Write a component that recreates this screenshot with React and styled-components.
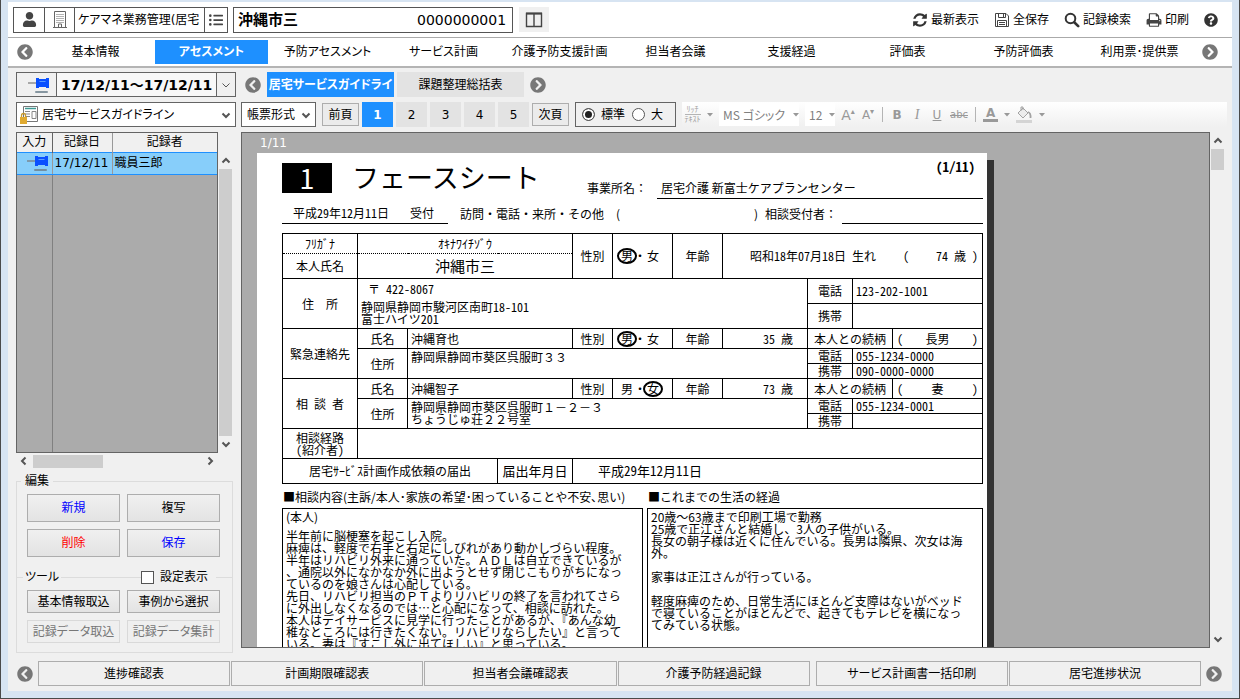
import { useState } from "react"
import styled, { createGlobalStyle, css } from "styled-components"
import { FaUser, FaListUl, FaChevronCircleLeft, FaChevronCircleRight, FaQuestionCircle } from "react-icons/fa"

const TABS = ["基本情報", "アセスメント", "予防アセスメント", "サービス計画", "介護予防支援計画", "担当者会議", "支援経過", "評価表", "予防評価表", "利用票･提供票"]
const REPORTS = ["進捗確認表", "計画期限確認表", "担当者会議確認表", "介護予防経過記録", "サービス計画書一括印刷", "居宅進捗状況"]
const COLUMNS = [75, 50, 90, 75, 40, 60, 50, 85, 45, 40, 90]

const CONSULTATION = `半年前に脳梗塞を起こし入院。
麻痺は、軽度で右手と右足にしびれがあり動かしづらい程度。
半年はリハビリ外来に通っていた。ＡＤＬは自立できているが
、通院以外になかなか外に出ようとせず閉じこもりがちになっ
ているのを娘さんは心配している。
先日、リハビリ担当のＰＴよりリハビリの終了を言われてさら
に外出しなくなるのでは…と心配になって、相談に訪れた。
本人はデイサービスに見学に行ったことがあるが、『あんな幼
稚なところには行きたくない。リハビリならしたい』と言って
いる。妻は『すこし外に出てほしい』と思っている。`

const HISTORY = `20歳～63歳まで印刷工場で勤務
25歳で正江さんと結婚し、3人の子供がいる。
長女の朝子様は近くに住んでいる。長男は隣県、次女は海
外。

家事は正江さんが行っている。

軽度麻痺のため、日常生活にほとんど支障はないがベッド
で寝ていることがほとんどで、起きてもテレビを横になっ
てみている状態。`

/* ---------- icons ---------- */

const Building = () => (
  <svg width="16" height="18" viewBox="0 0 16 18" fill="none" stroke="#666">
    <path d="M2.500 .5h11v16h-11z" />
    <path d="M4.500 3.500h8M4.500 5.500h8M4.500 7.500h8M4.500 9.500h8M4.500 11.500h8" strokeDasharray="1 1" />
    <path d="M6.500 16v-3h3v3M1 16.500h14" />
  </svg>
)

const Panes = () => (
  <svg width="18" height="16" viewBox="0 0 18 16" fill="none" stroke="#444">
    <path d="M1.500 1.500h15v13h-15zM9 2v12" strokeWidth="1.400" />
    <path d="M1 1.500h16" strokeWidth="2" />
  </svg>
)

const Refresh = () => (
  <svg width="16" height="16" viewBox="0 0 1792 1792" fill="#333">
    <path d="M1639 1056q0 5-1 7-64 268-268 434.500t-478 166.500q-146 0-282.500-55t-243.500-157l-129 129q-19 19-45 19t-45-19-19-45v-448q0-26 19-45t45-19h448q26 0 45 19t19 45-19 45l-137 137q71 66 161 102t187 36q134 0 250-65t186-179q11-17 53-117 8-23 30-23h192q13 0 22.500 9.500t9.500 22.500zm25-800v448q0 26-19 45t-45 19h-448q-26 0-45-19t-19-45 19-45l138-138q-148-137-349-137-134 0-250 65t-186 179q-11 17-53 117-8 23-30 23h-199q-13 0-22.500-9.500t-9.500-22.500v-7q65-268 270-434.500t480-166.500q146 0 284 55.500t245 156.500l130-129q19-19 45-19t45 19 19 45z" />
  </svg>
)

const Floppy = () => (
  <svg width="16" height="16" viewBox="0 0 16 16" fill="none" stroke="#444">
    <path d="M1.500 1.500h10.500l2.500 2.500v10.500h-13z" />
    <path d="M4.500 1.500v4h7v-4M9.500 2v3M3.500 14.500v-6h9v6M5 10.500h6M5 12.500h6" />
  </svg>
)

const Search = () => (
  <svg width="16" height="16" viewBox="0 0 16 16" fill="none" stroke="#333" strokeLinecap="round">
    <circle cx="6.500" cy="6.500" r="4.800" strokeWidth="2" />
    <path d="M10.500 10.500l3.700 3.700" strokeWidth="2.600" />
  </svg>
)

const Print = () => (
  <svg width="16" height="16" viewBox="0 0 1792 1792" fill="#444">
    <path d="M448 1536h896v-256h-896v256zm0-640h896v-384h-160q-40 0-68-28t-28-68v-160h-640v640zm1152 64q0-26-19-45t-45-19-45 19-19 45 19 45 45 19 45-19 19-45zm128 0v416q0 13-9.500 22.500t-22.500 9.500h-224v160q0 40-28 68t-68 28h-960q-40 0-68-28t-28-68v-160h-224q-13 0-22.500-9.500t-9.500-22.500v-416q0-79 56.500-135.500t135.500-56.500h64v-544q0-40 28-68t68-28h672q40 0 88 20t76 48l152 152q28 28 48 76t20 88v256h64q79 0 135.500 56.500t56.500 135.500z" />
  </svg>
)

const Pin = () => (
  <svg width="22" height="18" viewBox="0 0 22 18">
    <path d="M0 7h9" stroke="#777" strokeWidth="1.200" />
    <path d="M8 2h3v1h7V2h3v10h-3v-1h-7v1H8z" fill="#0a50ff" />
    <path d="M11.500 5.500h6" stroke="#5b9bff" />
    <rect x="7" y="15" width="13" height="2" rx="1" fill="#6b7f8c" opacity=".8" />
  </svg>
)

const FormLock = () => (
  <svg width="20" height="20" viewBox="0 0 20 20" fill="none">
    <path d="M4.500 1.500h14v15h-14z" fill="#fff" stroke="#777" />
    <path d="M6 3.500h11" stroke="#3f9a94" strokeWidth="1.500" />
    <path d="M6 6.500h5M6 9h5M6 11.500h5M13 6.500h4v7h-4z" stroke="#888" />
    <path d="M2.500 12v-1.500q0-2 2-2t2 2V12" stroke="#c99a2c" strokeWidth="1.300" />
    <rect x="1" y="12" width="7" height="7" fill="#e0aa30" />
  </svg>
)

const Bucket = () => (
  <svg width="17" height="18" viewBox="0 0 17 18" fill="none" stroke="#a3a3a3">
    <path d="M2 7l5-5 5 5-5 5zM5 5V1h2v3" fill="#ececec" />
    <path d="M12 6q3 1 2.500 6" strokeWidth="1.800" />
    <path d="M0 15.500h16" stroke="#d4d4d4" strokeWidth="3" />
  </svg>
)

const TURN = { down: 0, left: 90, up: 180, right: 270 }
const Chevron = ({ dir = "down", weight = 2 }) => (
  <svg width="10" height="10" viewBox="0 0 10 10" fill="none" stroke="#555">
    <path d="M1.500 3.500L5 7l3.500-3.500" strokeWidth={weight} transform={`rotate(${TURN[dir]} 5 5)`} />
  </svg>
)

const Caret = () => (
  <svg width="6" height="4" viewBox="0 0 6 4" fill="#999"><path d="M0 0h6L3 3.500z" /></svg>
)

const Sex = ({ value }) => (
  <SexPair>
    <Mark $on={value === "男"}>男</Mark><i>・</i><Mark $on={value === "女"}>女</Mark>
  </SexPair>
)

const PersonRows = ({ title, name, sex, age, relation, address, tel, mobile }) => (
  <>
    <Row $h={20}>
      <Cell rowSpan={3}>{title}</Cell>
      <Cell>氏名</Cell>
      <Cell $left colSpan={2}>{name}</Cell>
      <Cell>性別</Cell>
      <Cell><Sex value={sex} /></Cell>
      <Cell>年齢</Cell>
      <Cell $right>{age} 歳</Cell>
      <Cell colSpan={2}>本人との続柄</Cell>
      <Cell><Spread><span>(</span><span>{relation}</span><span>)</span></Spread></Cell>
    </Row>
    <Row $h={15}>
      <Cell rowSpan={2}>住所</Cell>
      <Cell $left $top $wide colSpan={6} rowSpan={2}>{address}</Cell>
      <Cell>電話</Cell>
      <Cell $left colSpan={2}>{tel}</Cell>
    </Row>
    <Row $h={15}>
      <Cell>携帯</Cell>
      <Cell $left colSpan={2}>{mobile}</Cell>
    </Row>
  </>
)

const FaceSheet = () => (
  <Paper>
    <PaperHead>
      <SheetNo>1</SheetNo>
      <SheetTitle>フェースシート</SheetTitle>
      <HeadRight>
        <PageCount>(1/11)</PageCount>
        <Office>事業所名：<OfficeName>居宅介護 新富士ケアプランセンター</OfficeName></Office>
      </HeadRight>
    </PaperHead>
    <Reception>
      <ReceivedOn><span>平成29年12月11日</span><span>受付</span></ReceivedOn>
      <Method><span>訪問・電話・来所・その他　(</span><span>)</span></Method>
      <span>相談受付者：</span>
      <Blank />
    </Reception>

    <Sheet>
      <colgroup>{COLUMNS.map((w, i) => <Col key={i} $w={w} />)}</colgroup>
      <tbody>
        <Row $h={20}>
          <Cell $dotted="bottom">ﾌﾘｶﾞﾅ</Cell>
          <Cell $dotted="bottom" colSpan={3}>ｵｷﾅﾜｲﾁｿﾞｳ</Cell>
          <Cell rowSpan={2}>性別</Cell>
          <Cell rowSpan={2}><Sex value="男" /></Cell>
          <Cell rowSpan={2}>年齢</Cell>
          <Cell colSpan={4} rowSpan={2}>
            <Birth><span>昭和18年07月18日 生れ</span><span>(</span><span>74 歳 )</span></Birth>
          </Cell>
        </Row>
        <Row $h={25}>
          <Cell $dotted="top">本人氏名</Cell>
          <Cell $dotted="top" $size={15} colSpan={3}>沖縄市三</Cell>
        </Row>
        <Row $h={25}>
          <Cell $wide rowSpan={2}>住　所</Cell>
          <Cell $left $top rowSpan={2} colSpan={7}>
            <Postal>〒 422-8067</Postal>
            {"静岡県静岡市駿河区南町18-101\n富士ハイツ201"}
          </Cell>
          <Cell>電話</Cell>
          <Cell $left colSpan={2}>123-202-1001</Cell>
        </Row>
        <Row $h={25}>
          <Cell>携帯</Cell>
          <Cell colSpan={2} />
        </Row>
        <PersonRows title="緊急連絡先" name="沖縄育也" sex="男" age="35" relation="長男"
          address="静岡県静岡市葵区呉服町３３" tel="055-1234-0000" mobile="090-0000-0000" />
        <PersonRows title="相 談 者" name="沖縄智子" sex="女" age="73" relation="妻"
          address={"静岡県静岡市葵区呉服町１－２－３\nちょうじゅ荘２２号室"} tel="055-1234-0001" />
        <Row $h={30}>
          <Cell>{"相談経路\n(紹介者)"}</Cell>
          <Cell colSpan={10} />
        </Row>
        <Row $h={25}>
          <Cell colSpan={3}>居宅ｻｰﾋﾞｽ計画作成依頼の届出</Cell>
          <Cell $size={13}>届出年月日</Cell>
          <Cell $left $indent $size={13} colSpan={7}>平成29年12月11日</Cell>
        </Row>
      </tbody>
    </Sheet>

    <Notes>
      <NoteTitle>■相談内容(主訴/本人･家族の希望･困っていることや不安､思い)</NoteTitle>
      <NoteTitle>■これまでの生活の経過</NoteTitle>
      <Note><Who>(本人)</Who>{CONSULTATION}</Note>
      <Note>{HISTORY}</Note>
    </Notes>
  </Paper>
)

const App = () => {
  const [tab, setTab] = useState(1)
  const [page, setPage] = useState(1)
  const [size, setSize] = useState("標準")

  return (
    <Frame>
      <GlobalStyle />
      <Header>
        <Group>
          <IconButton aria-label="利用者"><FaUser size={15} /></IconButton>
          <IconButton aria-label="事業所"><Building /></IconButton>
          <Business>ケアマネ業務管理(居宅</Business>
          <IconButton $narrow aria-label="一覧"><FaListUl size={14} /></IconButton>
        </Group>
        <Group>
          <ClientName aria-label="利用者名" defaultValue="沖縄市三" />
          <ClientCode aria-label="利用者番号" defaultValue="0000000001" />
        </Group>
        <PaneButton aria-label="分割"><Panes /></PaneButton>
        <Actions>
          <Action><Refresh />最新表示</Action>
          <Action><Floppy />全保存</Action>
          <Action><Search />記録検索</Action>
          <Action><Print />印刷</Action>
          <Action aria-label="ヘルプ"><FaQuestionCircle size={14} /></Action>
        </Actions>
      </Header>

      <TabBar>
        <Round aria-label="前へ"><FaChevronCircleLeft size={16} /></Round>
        <Tabs>
          {TABS.map((t, i) => <Tab key={t} $active={i === tab} onClick={() => setTab(i)}>{t}</Tab>)}
        </Tabs>
        <Round aria-label="次へ"><FaChevronCircleRight size={16} /></Round>
      </TabBar>

      <Body>
        <Side>
          <Period>
            <PinCell><Pin /></PinCell>
            <PeriodInput aria-label="期間" defaultValue="17/12/11～17/12/11" />
            <Drop aria-label="期間を選択"><Chevron weight={1} /></Drop>
          </Period>
          <SelectBox>
            <FormLock />
            <Select aria-label="帳票"><option>居宅サービスガイドライン</option></Select>
            <Chevron />
          </SelectBox>

          <ListGrid>
            <List>
              <ListTable>
                <thead><tr><th>入力</th><th>記録日</th><th>記録者</th></tr></thead>
                <tbody><tr><td><Pin /></td><td>17/12/11</td><td>職員三郎</td></tr></tbody>
              </ListTable>
              <ListRest />
            </List>
            <VBar $belowHead>
              <Chevron dir="up" /><Thumb $fill /><Chevron />
            </VBar>
            <HBar>
              <Chevron dir="left" /><HThumb /><Chevron dir="right" />
            </HBar>
          </ListGrid>

          <EditBox>
            <legend>編集</legend>
            <Push $tone="#00f">新規</Push>
            <Push>複写</Push>
            <Push $tone="#f00">削除</Push>
            <Push $tone="#00f">保存</Push>
          </EditBox>
          <ToolBox>
            <ToolHead>
              <span>ツール</span>
              <Rule />
              <label><input type="checkbox" /><span>設定表示</span></label>
            </ToolHead>
            <Push $low>基本情報取込</Push>
            <Push $low>事例から選択</Push>
            <Push $low disabled>記録データ取込</Push>
            <Push $low disabled>記録データ集計</Push>
          </ToolBox>
        </Side>

        <Main>
          <SubTabs>
            <Round aria-label="前へ"><FaChevronCircleLeft size={16} /></Round>
            <SubTab $active>居宅サービスガイドライ</SubTab>
            <SubTab>課題整理総括表</SubTab>
            <Round aria-label="次へ"><FaChevronCircleRight size={16} /></Round>
          </SubTabs>

          <ToolRow>
            <SelectBox $short>
              <Select aria-label="表示形式"><option>帳票形式</option></Select>
              <Chevron />
            </SelectBox>
            <Pager>
              <Turn>前頁</Turn>
              {[1, 2, 3, 4, 5].map(n => (
                <PageNo key={n} $active={n === page} onClick={() => setPage(n)}>{n}</PageNo>
              ))}
              <Turn>次頁</Turn>
            </Pager>
            <SizeGroup>
              {["標準", "大"].map(s => (
                <label key={s}>
                  <Radio name="size" checked={size === s} onChange={() => setSize(s)} />{s}
                </label>
              ))}
            </SizeGroup>
            <Rich>
              <RichText><span>ﾘｯﾁ</span><span>ﾃｷｽﾄ</span></RichText>
              <Caret />
              <FontField><FontSelect aria-label="フォント" disabled><option>MS ゴシック</option></FontSelect><Caret /></FontField>
              <FontField $small><FontSelect aria-label="文字サイズ" disabled><option>12</option></FontSelect><Caret /></FontField>
              <Tool $large aria-label="拡大">A<sup>▴</sup></Tool>
              <Tool aria-label="縮小">A<sup>▾</sup></Tool>
              <Sep />
              <Tool><b>B</b></Tool>
              <Tool><em>I</em></Tool>
              <Tool><u>U</u></Tool>
              <Tool $tiny><s>abc</s></Tool>
              <Sep />
              <Tool $bar aria-label="文字色">A</Tool>
              <Caret />
              <Bucket />
              <Caret />
            </Rich>
          </ToolRow>

          <ViewRow>
            <Viewer>
              <ViewPage>1/11</ViewPage>
              <FaceSheet />
            </Viewer>
            <VBar>
              <Chevron dir="up" /><Thumb /><Chevron />
            </VBar>
          </ViewRow>
        </Main>
      </Body>

      <Footer>
        <Round aria-label="前へ"><FaChevronCircleLeft size={16} /></Round>
        <Reports>{REPORTS.map(r => <Report key={r}>{r}</Report>)}</Reports>
        <Round aria-label="次へ"><FaChevronCircleRight size={16} /></Round>
      </Footer>
    </Frame>
  )
}

export default App

const GlobalStyle = createGlobalStyle`
*{box-sizing:border-box;}
body{margin:0;}
body,button,input,select{
  font-family:"DejaVu Sans","Noto Sans CJK JP",sans-serif;
  font-size:12px;
  line-height:16px;
  font-feature-settings:"palt";
  color:#000;
}
button{
  padding:0;
  border:0;
  background:none;
  white-space:nowrap;
}
svg{flex:none;display:block;}
`

const Frame = styled.div`
display:flex;
flex-direction:column;
height:100vh;
padding:2px 7px 7px;
border:solid #4a4a4a;
border-width:0 1px 1px;
background:#d7e4f2;
overflow:hidden;
`
const Header = styled.header`
display:flex;
align-items:center;
gap:5px;
height:36px;
padding:0 14px 0 5px;
background:#fff;
border-bottom:1px solid #aaa;
`
const Group = styled.div`
display:flex;
height:26px;
border:1px solid #555;
> * + *{border-left:1px solid #555;}
`
const IconButton = styled.button`
display:flex;
align-items:center;
justify-content:center;
width:${p => p.$narrow ? 23 : 30}px;
color:#444;
`
const Business = styled.div`
width:130px;
padding-left:3px;
line-height:24px;
white-space:nowrap;
overflow:hidden;
`
const ClientName = styled.input`
width:179px;
padding:0 4px;
border:0;
font-size:15px;
font-weight:bold;
`
const ClientCode = styled.input`
width:99px;
padding:0 4px;
border:0;
font-size:14px;
`
const PaneButton = styled.button`
display:flex;
align-items:center;
justify-content:center;
width:30px;
height:25px;
background:#f0f0f0;
margin-left:1px;
`
const Actions = styled.nav`
display:flex;
gap:15px;
margin-left:auto;
`
const Action = styled.button`
display:flex;
align-items:center;
gap:3px;
color:#000;
svg{color:#333;}
`
const TabBar = styled.nav`
display:flex;
align-items:center;
gap:6px;
height:30px;
padding:0 14px 0 9px;
background:#fff;
border-bottom:2px solid #b4b4b4;
`
const Round = styled.button`
flex:none;
width:16px;
height:16px;
color:#777;
`
const Tabs = styled.div`
display:flex;
flex:1;
gap:3px;
`
const active = css`
background:#1e90ff;
color:#fff;
font-weight:bold;
`
const Tab = styled.button`
flex:1 1 0;
height:24px;
${p => p.$active && active}
`
const Body = styled.div`
display:flex;
flex:1;
gap:5px;
min-height:0;
padding:4px 8px 0;
background:#f0f0f0;
`
const Side = styled.aside`
display:flex;
flex-direction:column;
gap:5px;
width:220px;
flex:none;
`
const Period = styled.div`
display:flex;
flex:none;
height:25px;
border:1px solid #646464;
`
const PinCell = styled.span`
display:flex;
align-items:center;
justify-content:flex-end;
width:39px;
padding-right:6px;
`
const PeriodInput = styled.input`
flex:1;
min-width:0;
padding:0 0 0 4px;
border:solid #646464;
border-width:0 1px;
background:#f8f8f8;
font-size:14px;
font-weight:bold;
`
const Drop = styled.button`
display:flex;
align-items:center;
justify-content:center;
width:18px;
`
const SelectBox = styled.div`
display:flex;
align-items:center;
flex:none;
gap:3px;
height:25px;
width:${p => p.$short ? "75px" : "auto"};
padding:0 4px 0 ${p => p.$short ? 5 : 2}px;
border:1px solid #646464;
background:#fff;
`
const Select = styled.select`
flex:1;
min-width:0;
padding:0;
appearance:none;
border:0;
background:none;
`
const ListGrid = styled.div`
display:grid;
grid-template:1fr 14px / 202px 14px;
gap:1px;
flex:1;
min-height:0;
`
const List = styled.div`
display:flex;
flex-direction:column;
border:1px solid #646464;
background:#ababab;
`
const ListTable = styled.table`
width:100%;
table-layout:fixed;
border-collapse:collapse;
th{
  height:19px;
  padding:0;
  background:#f0f0f0;
  border-right:1px solid #999;
  font-weight:normal;
}
th:nth-child(1){width:35px;border-color:#646464;}
th:nth-child(2){width:60px;}
td{
  height:22px;
  padding:0 2px;
  background:#87cefa;
  border:solid #1e90ff;
  border-width:1px 0;
  white-space:nowrap;
}
td + td{border-left:1px solid #999;}
td:first-child svg{margin-left:8px;}
th:last-child{border-right:0;}
`
const ListRest = styled.div`
flex:1;
width:36px;
border-right:1px solid #808080;
`
const VBar = styled.div`
display:flex;
flex-direction:column;
align-items:center;
justify-content:space-between;
gap:3px;
width:13px;
padding:${p => p.$belowHead ? 24 : 4}px 0 4px;
> :last-child{margin-top:auto;}
`
const Thumb = styled.div`
width:13px;
height:21px;
flex:${p => p.$fill ? 1 : "none"};
background:#cdcdcd;
`
const HBar = styled.div`
display:flex;
align-items:center;
gap:4px;
padding:0 3px;
> :last-child{margin-left:auto;}
`
const HThumb = styled.div`
width:70px;
height:13px;
background:#cdcdcd;
`
const box = css`
display:grid;
grid-template-columns:1fr 1fr;
gap:7px;
width:217px;
margin:0;
min-width:0;
border:1px solid #dcdcdc;
`
const EditBox = styled.fieldset`
${box}
height:96px;
padding:5px 12px 0 10px;
border-bottom:0;
align-content:start;
legend{padding:0 4px;margin-left:-6px;}
`
const ToolBox = styled.section`
${box}
padding:0 12px 9px 10px;
border-top:0;
margin-top:-5px;
`
const ToolHead = styled.div`
display:flex;
align-items:center;
grid-column:1 / 3;
margin:0 -12px -2px -10px;
line-height:16px;
&::before{content:"";width:6px;border-top:1px solid #dcdcdc;}
&::after{content:"";flex:1;border-top:1px solid #dcdcdc;}
> span{padding:0 2px;}
label{display:flex;align-items:center;gap:6px;padding-right:8px;}
input{
  appearance:none;
  width:13px;
  height:13px;
  margin:0;
  border:1px solid #555;
  background:#fff;
}
`
const Rule = styled.i`
width:80px;
border-top:1px solid #dcdcdc;
`
const Push = styled.button`
height:${p => p.$low ? 23 : 28}px;
border:1px solid #adadad;
background:linear-gradient(#f0f0f0,#e3e3e3);
color:${p => p.$tone || "#000"};
&:disabled{
  color:#777;
  border-color:#d9d9d9;
  background:#efefef;
}
`
const Main = styled.main`
display:flex;
flex-direction:column;
flex:1;
gap:5px;
min-width:0;
padding-bottom:5px;
`
const SubTabs = styled.div`
display:flex;
align-items:center;
gap:3px;
height:25px;
flex:none;
padding-left:4px;
> :first-child{margin-right:3px;}
> :last-child{margin-left:3px;}
`
const SubTab = styled.button`
width:127px;
height:25px;
background:#e3e3e3;
${p => p.$active && active}
`
const ToolRow = styled.div`
display:flex;
align-items:center;
gap:6px;
height:25px;
flex:none;
`
const Pager = styled.div`
display:flex;
align-items:center;
gap:3px;
`
const Turn = styled.button`
width:37px;
height:23px;
border:1px solid #adadad;
background:#ebebeb;
`
const PageNo = styled.button`
width:31px;
height:25px;
background:#e3e3e3;
${p => p.$active && active}
`
const SizeGroup = styled.div`
display:flex;
align-items:center;
gap:7px;
width:101px;
height:25px;
padding-left:6px;
border:1px solid #646464;
label{display:flex;align-items:center;gap:6px;}
`
const Radio = styled.input.attrs({ type: "radio" })`
appearance:none;
width:13px;
height:13px;
margin:0;
border:1px solid #555;
border-radius:50%;
background:#fff;
&:checked{
  background:#222;
  box-shadow:inset 0 0 0 2px #fff;
}
`
const Rich = styled.div`
display:flex;
align-items:center;
gap:6px;
flex:1;
height:25px;
padding-left:2px;
margin-right:-3px;
background:linear-gradient(#fff,#f0f0f0);
color:#a0a0a0;
`
const RichText = styled.span`
display:flex;
flex-direction:column;
align-items:center;
width:17px;
font-size:8px;
line-height:9px;
span + span{border-top:1px solid #b4b4b4;}
`
const FontField = styled.span`
display:flex;
align-items:center;
gap:3px;
width:${p => p.$small ? 30 : 80}px;
height:23px;
padding-left:4px;
background:#fff;
`
const FontSelect = styled(Select)`
font-family:"Noto Sans CJK JP",sans-serif;
color:#808080;
opacity:1;
`
const Tool = styled.button`
min-width:14px;
font-size:${p => p.$tiny ? 10 : p.$large ? 14 : 12}px;
font-weight:${p => p.$bar ? "bold" : "normal"};
color:#999;
border-bottom:${p => p.$bar ? "3px solid #999" : 0};
padding:0 ${p => p.$bar ? 3 : 0}px;
line-height:${p => p.$bar ? 12 : 16}px;
sup{font-size:8px;line-height:0;}
em{font-family:"Liberation Serif",serif;font-size:14px;}
`
const Sep = styled.i`
height:15px;
margin:0 1px;
border-left:1px solid #b4b4b4;
`
const ViewRow = styled.div`
display:flex;
flex:1;
min-height:0;
gap:1px;
`
const Viewer = styled.div`
flex:1;
min-width:0;
padding-left:15px;
border:1px solid #646464;
background:#ababab;
overflow:hidden;
`
const ViewPage = styled.div`
padding:0 3px;
line-height:20px;
color:#fff;
`

/* the printed page keeps its own fixed width */
const Paper = styled.article`
width:730px;
min-height:1000px;
padding:8px 4px 25px 25px;
background:#fff;
box-shadow:7px 7px 0 #333;
font-family:"Noto Sans CJK JP",sans-serif;
font-feature-settings:normal;
line-height:12px;
`
/* half-width digits and kana */
const half = css`
font-feature-settings:"hwid";
`
const PaperHead = styled.div`
display:grid;
grid-template-columns:50px 255px 1fr;
height:38px;
`
const SheetNo = styled.div`
height:30px;
margin-top:2px;
background:#000;
color:#fff;
font-size:28px;
line-height:28px;
text-align:center;
${half}
`
const SheetTitle = styled.h1`
margin:0;
padding-left:20px;
font-size:27px;
line-height:32px;
font-weight:normal;
`
const HeadRight = styled.div`
display:flex;
flex-direction:column;
justify-content:space-between;
`
const PageCount = styled.b`
align-self:flex-end;
padding-right:8px;
font-size:13px;
${half}
`
const Office = styled.div`
display:flex;
line-height:20px;
`
const OfficeName = styled.span`
flex:1;
margin-left:10px;
padding-left:4px;
border-bottom:1px solid #000;
`
const Reception = styled.div`
display:flex;
align-items:flex-end;
height:25px;
line-height:20px;
`
const ReceivedOn = styled.div`
display:flex;
gap:21px;
width:166px;
padding-left:11px;
border-bottom:1px solid #000;
${half}
`
const Method = styled.div`
display:flex;
justify-content:space-between;
width:317px;
padding:0 7px 0 12px;
`
const Blank = styled.div`
flex:1;
margin-left:5px;
border-bottom:1px solid #000;
`
const Sheet = styled.table`
width:701px;
margin-top:9px;
table-layout:fixed;
border-collapse:collapse;
`
const Col = styled.col`
width:${p => p.$w}px;
`
const Row = styled.tr`
height:${p => p.$h}px;
`
const Cell = styled.td`
padding:0;
border:1px solid #000;
font-size:${p => p.$size || 12}px;
text-align:center;
white-space:pre-line;
${p => !p.$wide && half}
${p => p.$dotted && css`border-${p.$dotted}-style:dotted;`}
${p => p.$left && css`text-align:left;padding-left:${p.$indent ? 25 : 3}px;`}
${p => p.$right && css`text-align:right;padding-right:14px;`}
${p => p.$top && css`vertical-align:top;padding-top:2px;`}
`
const Postal = styled.div`
padding:2px 0 6px 7px;
`
const SexPair = styled.span`
display:flex;
justify-content:center;
padding-right:5px;
i{width:14px;margin:0;font-style:normal;text-align:center;}
`
const Mark = styled.span`
position:relative;
${p => p.$on && css`
&::after{
  content:"";
  position:absolute;
  inset:-2px -4px;
  border:2px solid #000;
  border-radius:50%;
}`}
`
const Spread = styled.span`
display:flex;
justify-content:space-between;
padding:0 4px;
`
const Birth = styled.span`
display:flex;
justify-content:space-between;
padding:0 4px 0 27px;
`
const Notes = styled.div`
display:grid;
grid-template-columns:361px 336px;
grid-template-rows:24px 420px;
column-gap:4px;
`
const NoteTitle = styled.h2`
margin:0;
padding-left:1px;
font-size:12px;
line-height:26px;
font-weight:normal;
white-space:nowrap;
`
const Note = styled.div`
padding:2px 3px;
border:1px solid #000;
white-space:pre-wrap;
`
const Who = styled.div`
margin-bottom:7px;
`
const Footer = styled.footer`
display:flex;
align-items:center;
gap:5px;
flex:none;
height:38px;
padding:8px 10px 5px 9px;
background:#f0f0f0;
`
const Reports = styled.div`
display:flex;
flex:1;
gap:1px;
button:nth-child(5){margin-left:5px;}
`
const Report = styled.button`
flex:1 1 0;
height:25px;
border:1px solid #adadad;
background:#f0f0f0;
`
